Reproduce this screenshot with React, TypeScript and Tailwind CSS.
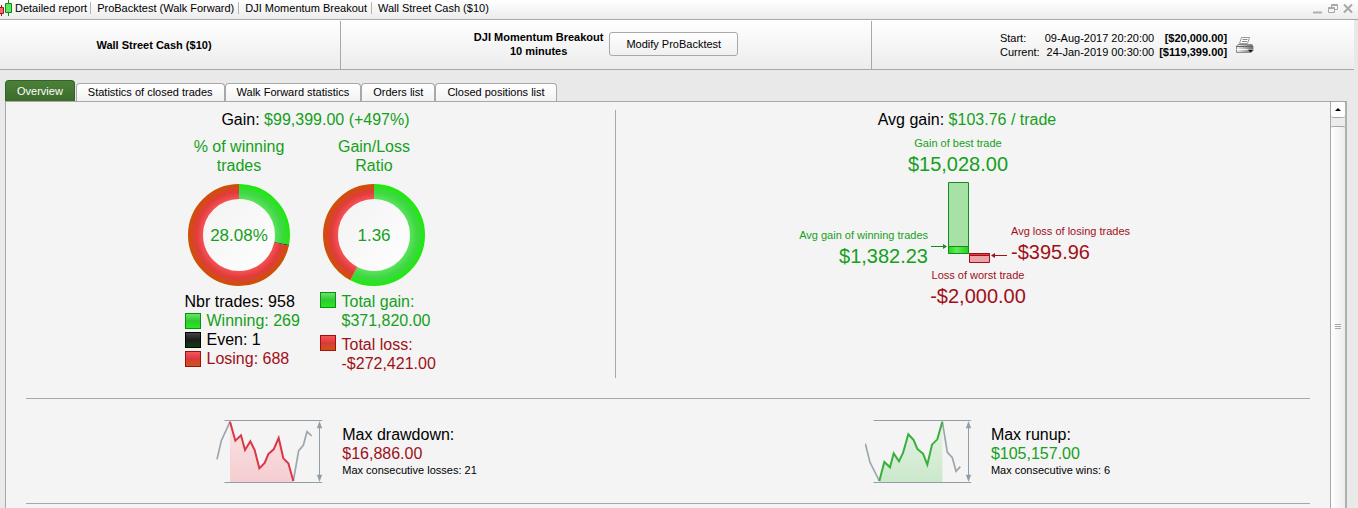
import { useState } from "react"
import clsx from "clsx"

const breadcrumbs = [
  "Detailed report",
  "ProBacktest (Walk Forward)",
  "DJI Momentum Breakout",
  "Wall Street Cash ($10)",
]

const tabs = [
  "Overview",
  "Statistics of closed trades",
  "Walk Forward statistics",
  "Orders list",
  "Closed positions list",
]

function CandlesIcon() {
  return (
    <svg width="13" height="17" viewBox="0 0 13 17" aria-hidden="true">
      <path d="M1.5 5v11" stroke="#a01818" />
      <path d="M-1 7.5h4.5v6H-1z" fill="#f4696b" stroke="#a01818" />
      <path d="M8.5 0v16" stroke="#138a1c" />
      <path d="M5.5 3.5h6v9h-6z" fill="#5de85f" stroke="#138a1c" />
    </svg>
  )
}

function PrinterIcon() {
  return (
    <svg width="19" height="18" viewBox="0 0 19 18" aria-hidden="true">
      <defs>
        <linearGradient id="printer" x1="0" x2="1" y1="0" y2="0">
          <stop offset="0" stopColor="#f2f2f2" />
          <stop offset="1" stopColor="#6c6c6c" />
        </linearGradient>
      </defs>
      <path d="M6.5 1.5h8l-2 6h-8z" fill="#fff" stroke="#9a9a9a" />
      <path d="M7.5 3.5h5M7 5.5h5" stroke="#8a8a8a" />
      <path d="M3 8.5h14l1 2v4l-2 2H1.5v-6z" fill="url(#printer)" stroke="#8a8a8a" />
      <path d="M1 10.5h17" stroke="#666" />
      <path d="M1.5 13.5h12" stroke="#fff" />
      <path d="M12 13.5h7l-3.5 3.5z" fill="#111" stroke="#fff" strokeWidth=".5" />
    </svg>
  )
}

function TitleBar() {
  return (
    <header className="flex h-[20px] items-center border-b border-[#a8a8a8] bg-linear-to-b from-white to-[#ececec] pb-[3px]">
      <CandlesIcon />
      <nav className="flex flex-1 items-center">
        {breadcrumbs.map((crumb, i) => (
          <span
            key={crumb}
            className={clsx(
              "leading-3",
              i === 0 ? "pr-[3px] pl-[2px]" : "border-l border-[#b4b4b4] pr-1 pl-[6px]"
            )}
          >
            {crumb}
          </span>
        ))}
      </nav>
      <div className="flex items-center gap-[5px] pr-[5px]">
        <button aria-label="Minimize">
          <svg width="10" height="11" viewBox="0 0 10 11">
            <path d="M0 9.5h9" stroke="#b0b0b0" strokeWidth="2" />
          </svg>
        </button>
        <button aria-label="Restore">
          <svg width="10" height="11" viewBox="0 0 10 11" fill="none" stroke="#a8a8a8">
            <path d="M3.5 4V1.5h6v5H7M3.5 2.5h6" />
            <path d="M.5 4.5h6v5h-6zM.5 5.5h6" />
          </svg>
        </button>
        <button aria-label="Close">
          <svg width="10" height="11" viewBox="0 0 10 11">
            <path d="M1 1.5l8 8M9 1.5l-8 8" stroke="#a8a8a8" strokeWidth="2" />
          </svg>
        </button>
      </div>
    </header>
  )
}

function SummaryBar() {
  return (
    <section className="mr-1 grid h-[50px] grid-cols-[341fr_531fr_482fr] border-b border-[#a8a8a8] bg-linear-to-b from-white to-[#ececec] pt-px">
      <div className="flex items-center justify-center border-r border-[#a8a8a8] pr-8 font-bold">
        Wall Street Cash ($10)
      </div>
      <div className="flex items-center justify-center gap-[6px] border-r border-[#a8a8a8] pb-[2px]">
        <div className="text-center leading-[14px] font-bold">
          DJI Momentum Breakout
          <br />
          10 minutes
        </div>
        <button className="h-6 rounded-[3px] border border-[#a8a8a8] bg-linear-to-b from-white to-[#f0f0f0] px-4">
          Modify ProBacktest
        </button>
      </div>
      <div className="flex items-center justify-center gap-2 pb-px pl-7">
        <table className="leading-[14px]">
          <tbody>
            <tr>
              <th className="text-left font-normal">Start:</th>
              <td className="pl-[5px] text-right">09-Aug-2017 20:20:00</td>
              <td className="pl-[5px] text-right font-bold">[$20,000.00]</td>
            </tr>
            <tr>
              <th className="text-left font-normal">Current:</th>
              <td className="pl-[5px] text-right">24-Jan-2019 00:30:00</td>
              <td className="pl-[5px] text-right font-bold">[$119,399.00]</td>
            </tr>
          </tbody>
        </table>
        <button aria-label="Print">
          <PrinterIcon />
        </button>
      </div>
    </section>
  )
}

function Donut({ id, label, green, even = 0 }: { id: string; label: string; green: number; even?: number }) {
  const red = 100 - green - even
  return (
    <svg width="102" height="102" viewBox="0 0 102 102" className="mx-auto block">
      <defs>
        <radialGradient id={id + "-green"} gradientUnits="userSpaceOnUse" cx="51" cy="51" r="51">
          <stop offset=".7" stopColor="#5be45b" />
          <stop offset=".84" stopColor="#3fd746" />
          <stop offset="1" stopColor="#1fe80c" />
        </radialGradient>
        <radialGradient id={id + "-red"} gradientUnits="userSpaceOnUse" cx="51" cy="51" r="51">
          <stop offset=".7" stopColor="#f85255" />
          <stop offset=".84" stopColor="#e03c3c" />
          <stop offset="1" stopColor="#cc5200" />
        </radialGradient>
        <linearGradient id={id + "-hole"} x1="0" x2="1" y1="0" y2="1">
          <stop offset="0" stopColor="#f2f2f2" />
          <stop offset="1" stopColor="#fff" />
        </linearGradient>
      </defs>
      <circle cx="51" cy="51" r="37" fill={`url(#${id}-hole)`} />
      <g fill="none" strokeWidth="15" transform="rotate(-90 51 51)">
        <circle
          cx="51"
          cy="51"
          r="43.5"
          pathLength="100"
          stroke={`url(#${id}-green)`}
          strokeDasharray={`${green} ${100 - green}`}
        />
        <circle
          cx="51"
          cy="51"
          r="43.5"
          pathLength="100"
          stroke={`url(#${id}-red)`}
          strokeDasharray={`${red} ${100 - red}`}
          strokeDashoffset={-(green + even)}
        />
        {even > 0 && (
          <circle
            cx="51"
            cy="51"
            r="43.5"
            pathLength="100"
            stroke="#2b2b10"
            strokeDasharray={`${even} ${100 - even}`}
            strokeDashoffset={-green}
          />
        )}
      </g>
      <text x="51" y="57" textAnchor="middle" fontSize="17" fill="#169f20">
        {label}
      </text>
    </svg>
  )
}

function Swatch({ className }: { className: string }) {
  return <span className={clsx("h-4 w-4 shrink-0 border bg-linear-to-b", className)} />
}

const greenSwatch = "border-[#138a1c] from-[#62e862] via-[#2fc832] to-[#25ec14]"
const redSwatch = "border-[#a01010] from-[#f85458] via-[#d83a3a] to-[#cc5412]"
const blackSwatch = "border-black from-[#444] via-[#1c1c1c] to-[#0c3c08]"

function GainPanel() {
  return (
    <section className="text-base leading-[19px]">
      <h2 className="pr-[10px] text-center">
        Gain: <span className="text-[#169f20]">$99,399.00 (+497%)</span>
      </h2>
      <div className="flex justify-center pt-2 pr-7">
        <div className="w-[135px]">
          <h3 className="pb-[9px] text-center text-[#169f20]">
            % of winning
            <br />
            trades
          </h3>
          <Donut id="winning" label="28.08%" green={28.08} even={0.3} />
          <ul className="pt-[6px] pl-[13px] whitespace-nowrap">
            <li>Nbr trades: 958</li>
            <li className="flex items-center gap-[6px] text-[#169f20]">
              <Swatch className={greenSwatch} />
              Winning: 269
            </li>
            <li className="flex items-center gap-[6px]">
              <Swatch className={blackSwatch} />
              Even: 1
            </li>
            <li className="flex items-center gap-[6px] text-[#a01018]">
              <Swatch className={redSwatch} />
              Losing: 688
            </li>
          </ul>
        </div>
        <div className="w-[135px]">
          <h3 className="pb-[9px] text-center text-[#169f20]">
            Gain/Loss
            <br />
            Ratio
          </h3>
          <Donut id="ratio" label="1.36" green={57.7} />
          <ul className="space-y-[5px] pt-[6px] pl-[13px] whitespace-nowrap">
            <li className="flex gap-[6px] text-[#169f20]">
              <Swatch className={greenSwatch} />
              <span>
                Total gain:
                <br />
                $371,820.00
              </span>
            </li>
            <li className="flex gap-[6px] text-[#a01018]">
              <Swatch className={redSwatch} />
              <span>
                Total loss:
                <br />
                -$272,421.00
              </span>
            </li>
          </ul>
        </div>
      </div>
    </section>
  )
}

function TradeBars() {
  return (
    <svg width="80" height="86" viewBox="0 0 80 86" aria-hidden="true">
      <defs>
        <linearGradient id="avg-gain" x1="0" x2="1" y1="0" y2="0">
          <stop offset="0" stopColor="#25d51c" />
          <stop offset=".4" stopColor="#62ea5c" />
          <stop offset="1" stopColor="#1fd313" />
        </linearGradient>
      </defs>
      <path d="M19.5 2.5h20v71h-20z" fill="#a6e2a6" stroke="#188a20" />
      <path d="M19.5 66.5h20v7h-20z" fill="url(#avg-gain)" stroke="#188a20" />
      <path d="M40.5 73.5h20v9h-20z" fill="#eba3a5" stroke="#a01018" />
      <path d="M40.5 73.5h20v2h-20z" fill="#e03c3c" stroke="#a01018" />
      <path d="M2 66.5h13" stroke="#188a20" />
      <path d="M14 64l4 2.5-4 2.5z" fill="#188a20" />
      <path d="M65 75.5h13" stroke="#a01018" />
      <path d="M66 73l-4 2.5 4 2.5z" fill="#a01018" />
    </svg>
  )
}

function AverageGainPanel() {
  return (
    <section className="pl-2">
      <h2 className="text-center text-base leading-[19px]">
        Avg gain: <span className="text-[#169f20]">$103.76 / trade</span>
      </h2>
      <div className="pt-[7px] pr-[18px] pb-[2px] text-center text-[#169f20]">
        <p className="leading-[14px]">Gain of best trade</p>
        <p className="text-xl leading-7">$15,028.00</p>
      </div>
      <div className="grid h-[86px] grid-cols-[1fr_80px_1fr] gap-x-px pl-1">
        <div className="pt-12 text-right text-[#169f20]">
          <p className="leading-[14px]">Avg gain of winning trades</p>
          <p className="text-xl leading-7">$1,382.23</p>
        </div>
        <TradeBars />
        <div className="pt-11 pl-px text-[#a01018]">
          <p className="leading-[14px]">Avg loss of losing trades</p>
          <p className="text-xl leading-7">-$395.96</p>
        </div>
      </div>
      <div className="pt-[2px] pl-[22px] text-center text-[#a01018]">
        <p className="leading-[14px]">Loss of worst trade</p>
        <p className="text-xl leading-7">-$2,000.00</p>
      </div>
    </section>
  )
}

function RangeArrow({ x }: { x: number }) {
  return (
    <>
      <path
        d={`M${x - 285} 31.5H${x + 8}M${x - 285} 217.5H${x + 8}M${x} 40V210`}
        stroke="#929ea6"
        strokeWidth="3"
      />
      <path d={`M${x} 33l8 22h-16zM${x} 216l8-22h-16z`} fill="#929ea6" />
    </>
  )
}

function DrawdownChart() {
  const line = "75,35 91,92 108,76 120,120 136,94 149,120 163,175 179,159 190,132 206,118 221,84 235,145 250,160 265,213"
  return (
    <svg width="107" height="66" viewBox="33 24 321 198" fill="none" aria-hidden="true">
      <defs>
        <linearGradient id="drawdown" x1="0" x2="0" y1="0" y2="1">
          <stop offset="0" stopColor="#f8e4e5" />
          <stop offset="1" stopColor="#f6cdd0" />
        </linearGradient>
      </defs>
      <polygon points={`${line} 265,217 75,217`} fill="url(#drawdown)" />
      <RangeArrow x={343.5} />
      <g strokeWidth="5" stroke="#9aa5ac">
        <polyline points="36,148 49,92 75,35" />
        <polyline points="265,213 281,122 295,106 306,65 320,78" />
      </g>
      <polyline points={line} stroke="#dc3545" strokeWidth="6" />
    </svg>
  )
}

function RunupChart() {
  const line = "88,213 103,156 120,172 131,130 147,154 159,129 175,73 191,90 202,117 219,131 232,164 246,104 262,88 277,35"
  return (
    <svg width="107" height="66" viewBox="45 24 321 198" fill="none" aria-hidden="true">
      <defs>
        <linearGradient id="runup" x1="0" x2="0" y1="0" y2="1">
          <stop offset="0" stopColor="#e6f3e6" />
          <stop offset="1" stopColor="#cbe8cb" />
        </linearGradient>
      </defs>
      <polygon points={`${line} 277,217 88,217`} fill="url(#runup)" />
      <RangeArrow x={355.5} />
      <g strokeWidth="5" stroke="#9aa5ac">
        <polyline points="46,101 60,157 88,213" />
        <polyline points="277,35 292,127 307,143 318,184 331,170" />
      </g>
      <polyline points={line} stroke="#38b03c" strokeWidth="6" />
    </svg>
  )
}

function Extremes() {
  return (
    <div className="grid h-[105px] grid-cols-[649fr_635fr] border-b border-[#a8a8a8] pt-[19px]">
      <section className="flex justify-center gap-[19px] pr-2">
        <DrawdownChart />
        <div className="pt-[7px] text-base leading-[19px]">
          <h2>Max drawdown:</h2>
          <p className="text-[#a01018]">$16,886.00</p>
          <p className="text-[11px] leading-[14px]">Max consecutive losses: 21</p>
        </div>
      </section>
      <section className="flex justify-center gap-[19px] pr-[10px]">
        <RunupChart />
        <div className="pt-[7px] text-base leading-[19px]">
          <h2>Max runup:</h2>
          <p className="text-[#169f20]">$105,157.00</p>
          <p className="text-[11px] leading-[14px]">Max consecutive wins: 6</p>
        </div>
      </section>
    </div>
  )
}

function Scrollbar() {
  return (
    <div className="flex w-[17px] shrink-0 flex-col border-r-2 border-l border-r-[#b0b0b0] border-l-[#a8a8a8] bg-[#ececec]">
      <button
        aria-label="Scroll up"
        className="flex h-4 items-center justify-center rounded-[3px] border-b border-[#a8a8a8] bg-white"
      >
        <svg width="6" height="3" viewBox="0 0 6 3">
          <path d="M0 3l3-3 3 3z" fill="#000" />
        </svg>
      </button>
      <div className="mt-2 flex-1 rounded-t-[2px] border-t border-[#a8a8a8] bg-linear-to-r from-white to-[#ededed] pt-[197px]">
        <div className="mx-auto h-[5px] w-[6px] border-y border-[#a8a8a8] pt-px">
          <div className="h-px bg-[#a8a8a8]" />
        </div>
      </div>
    </div>
  )
}

export default function App() {
  const [active, setActive] = useState("Overview")
  return (
    <div className="flex h-screen flex-col overflow-hidden bg-[#e9e9e9] font-['Liberation_Sans',Arial,sans-serif] text-[11px] text-black">
      <TitleBar />
      <SummaryBar />
      <div role="tablist" className="flex items-end pt-[10px] pl-[5px]">
        {tabs.map((tab) => (
          <button
            key={tab}
            role="tab"
            aria-selected={tab === active}
            onClick={() => setActive(tab)}
            className={clsx(
              "rounded-t-[4px] border border-b-0 px-[11px]",
              tab === active
                ? "mr-px h-[21px] border-[#2f6424] bg-linear-to-b from-[#4c8038] to-[#3c6c2c] text-white"
                : "h-[18px] border-[#a8a8a8] bg-linear-to-b from-white to-[#f2f2f2]"
            )}
          >
            {tab}
          </button>
        ))}
      </div>
      <main className="mr-[11px] ml-[5px] flex min-h-0 flex-1 border-t border-l border-[#a8a8a8] bg-[#f4f4f4]">
        <div className="min-w-0 flex-1 overflow-hidden pr-5 pl-5">
          <div className="grid grid-cols-[590fr_694fr] border-b border-[#a8a8a8] pt-2 pb-5">
            <div className="min-h-[268px] border-r border-[#a8a8a8]">
              <GainPanel />
            </div>
            <AverageGainPanel />
          </div>
          <Extremes />
        </div>
        <Scrollbar />
      </main>
    </div>
  )
}
